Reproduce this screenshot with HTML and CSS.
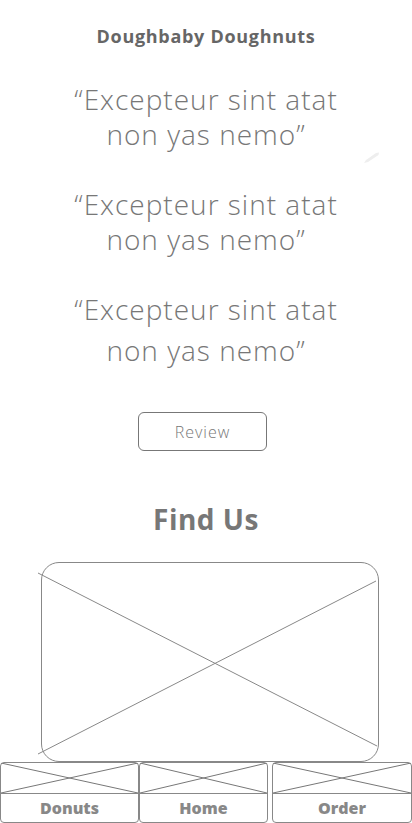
FILE: index.html
```html
<!DOCTYPE html>
<html>
<head>
<meta charset="utf-8">
<link rel="stylesheet" href="styles.css">
</head>
<body>
<div class="page">
  <h1 class="title">Doughbaby Doughnuts</h1>
  <p class="quote q1">“Excepteur sint atat<br>non yas nemo”</p>
  <p class="quote q2">“Excepteur sint atat<br>non yas nemo”</p>
  <p class="quote q3">“Excepteur sint atat<br>non yas nemo”</p>
  <svg class="pencil" width="20" height="14" viewBox="0 0 20 14"><path d="M2 12 L4 9 L14 2 L17 1.5 L16.5 4 L6 11 Z" fill="#eeeeee"/></svg>
  <div class="btn-row"><button class="review">Review</button></div>
  <h2 class="find">Find Us</h2>
  <div class="map">
    <svg class="map-x" width="344" height="184" viewBox="0 0 344 184"><line x1="0" y1="0" x2="339" y2="173" stroke="#888" stroke-width="1"/><line x1="0" y1="181" x2="338" y2="8" stroke="#888" stroke-width="1"/></svg>
  </div>
  <nav class="nav">
    <div class="cell c1">
      <div class="img"><svg class="ix" viewBox="0 0 100 100" preserveAspectRatio="none"><line x1="0" y1="0" x2="100" y2="100" vector-effect="non-scaling-stroke"/><line x1="0" y1="100" x2="100" y2="0" vector-effect="non-scaling-stroke"/></svg></div>
      <div class="label">Donuts</div>
    </div>
    <div class="cell c2">
      <div class="img"><svg class="ix" viewBox="0 0 100 100" preserveAspectRatio="none"><line x1="0" y1="0" x2="100" y2="100" vector-effect="non-scaling-stroke"/><line x1="0" y1="100" x2="100" y2="0" vector-effect="non-scaling-stroke"/></svg></div>
      <div class="label">Home</div>
    </div>
    <div class="cell c3">
      <div class="img"><svg class="ix" viewBox="0 0 100 100" preserveAspectRatio="none"><line x1="0" y1="0" x2="100" y2="100" vector-effect="non-scaling-stroke"/><line x1="0" y1="100" x2="100" y2="0" vector-effect="non-scaling-stroke"/></svg></div>
      <div class="label">Order</div>
    </div>
  </nav>
</div>
</body>
</html>
```

FILE: styles.css
```css
* { box-sizing: border-box; }
html, body { margin: 0; padding: 0; background: #fff; }
body { width: 412px; height: 823px; overflow: hidden; font-family: "Open Sans", Lato, sans-serif; }
.page { position: relative; display: flex; flex-direction: column; align-items: stretch; }
.title {
  margin: 25px 0 0; text-align: center; font-size: 18px; line-height: 22px;
  font-weight: 700; color: #666; letter-spacing: 0.7px;
}
.quote {
  margin: 0; text-align: center; font-size: 28px; font-weight: 300; color: #777;
  line-height: 35px; letter-spacing: 1px;
}
.q1 { margin-top: 35px; }
.q2 { margin-top: 35px; }
.q3 { margin-top: 32px; line-height: 41px; }
.pencil { position: absolute; left: 362px; top: 151px; }
.btn-row { display: flex; margin-top: 41px; padding-left: 138px; }
.review {
  width: 129px; height: 39px; border: 1px solid #777; border-radius: 6px; background: #fff;
  font-family: "Open Sans", sans-serif; font-weight: 300; font-size: 16px; color: #777; padding: 0;
  letter-spacing: 1px;
}
.find {
  margin: 52px 0 0; text-align: center; font-size: 28px; line-height: 32px;
  font-weight: 700; color: #777; letter-spacing: 0.5px;
}
.map {
  position: relative; margin: 27px 0 0 41px; width: 338px; height: 200px;
  border: 1.5px solid #888; border-radius: 18px;
}
.map-x { position: absolute; left: -4px; top: 10px; overflow: visible; }
.nav { display: flex; height: 61px; }
.cell {
  display: flex; flex-direction: column; border: 1.5px solid #888; border-radius: 4px;
  height: 61px;
}
.c1 { width: 139px; }
.c2 { width: 129px; }
.c3 { width: 140px; margin-left: 4px; }
.img { height: 31px; border-bottom: 1.5px solid #888; position: relative; }
.ix { display: block; width: 100%; height: 100%; stroke: #777; stroke-width: 1; }
.label {
  flex: 1; display: flex; align-items: center; justify-content: center;
  font-size: 16px; font-weight: 800; color: #888;
}
```
